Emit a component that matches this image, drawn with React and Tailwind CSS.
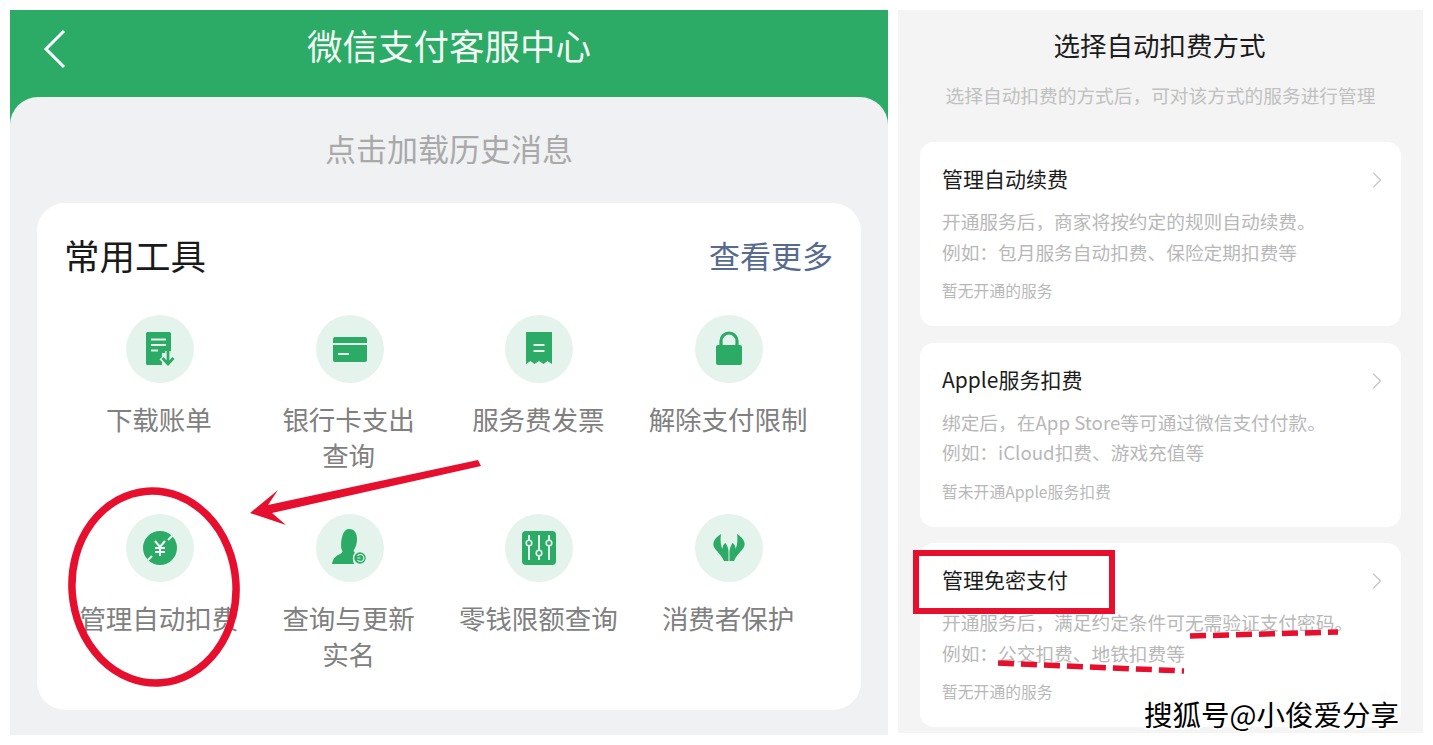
import { ChevronRight } from 'lucide-react';

const font = { fontFamily: '"Noto Sans CJK SC", "Noto Sans", sans-serif' };

const BillIcon = () => (
  <svg width="36" height="36" viewBox="0 0 36 36">
    <path d="M5.500 1h22a1.500 1.500 0 0 1 1.500 1.500V34H5.500A1.500 1.500 0 0 1 4 32.500v-30A1.500 1.500 0 0 1 5.500 1z" fill="#2bab66" />
    <path d="M9 8.500h15M9 14h15M9 19.500h7" stroke="#e4f3eb" strokeWidth="2" />
    <path d="M20 22h12v14H20z" fill="#e4f3eb" />
    <path d="M26 20v13M19.500 26.500l6.500 7 6.500-7" stroke="#e4f3eb" strokeWidth="5.500" fill="none" />
    <path d="M26 20v13M20.500 27l5.500 6 5.500-6" stroke="#2bab66" strokeWidth="2.800" fill="none" />
  </svg>
);

const CardIcon = () => (
  <svg width="36" height="36" viewBox="0 0 36 36">
    <rect x="1" y="6" width="34" height="25" rx="2" fill="#2bab66" />
    <path d="M1 13h34" stroke="#e4f3eb" strokeWidth="1.800" />
    <path d="M6 23h11" stroke="#e4f3eb" strokeWidth="2" />
  </svg>
);

const ReceiptIcon = () => (
  <svg width="36" height="36" viewBox="0 0 36 36">
    <path d="M5 1h26v32l-4.500-3-4 3-4.500-3-4.500 3-4-3L5 33z" fill="#2bab66" />
    <path d="M12.500 14h11M12.500 20h11" stroke="#e4f3eb" strokeWidth="2.200" />
  </svg>
);

const LockIcon = () => (
  <svg width="36" height="36" viewBox="0 0 36 36">
    <path d="M10 16v-6a8 8 0 0 1 16 0v6" stroke="#2bab66" strokeWidth="3.200" fill="none" />
    <rect x="5" y="14" width="26" height="20" rx="2" fill="#2bab66" />
  </svg>
);

const YuanIcon = () => (
  <svg width="36" height="36" viewBox="0 0 36 36">
    <circle cx="18" cy="18" r="17" fill="#2bab66" />
    <path d="M2 34L10 26M26 10L34 2" stroke="#e4f3eb" strokeWidth="2" />
    <path d="M13 11l5 6 5-6M18 17v9M13 18h10M13 22h10" stroke="#f4faf6" strokeWidth="2" fill="none" />
  </svg>
);

const PersonIcon = () => (
  <svg width="38" height="38" viewBox="0 0 38 38">
    <path d="M18 0c6 0 8 5 8 10 0 6-2 9-3.500 12 1 1.500 2 2.500 3 3-3 2-4 6-2.500 10H1c1-6 4-8 8-10 2-1 3-2 2-4-2-3-1-21 7-21z" fill="#2bab66" />
    <circle cx="29" cy="29" r="6.500" fill="#2bab66" stroke="#e4f3eb" strokeWidth="1.500" />
    <path d="M26.500 27a3.500 3.500 0 1 1 0 4M26.500 29h3" stroke="#e4f3eb" strokeWidth="1.200" fill="none" />
  </svg>
);

const SliderIcon = () => (
  <svg width="36" height="36" viewBox="0 0 36 36">
    <rect x="1" y="1" width="34" height="34" rx="4" fill="#2bab66" />
    <path d="M8 5v25M18 5v25M28 5v25" stroke="#e4f3eb" strokeWidth="2" />
    <circle cx="8" cy="13" r="2.800" fill="#2bab66" stroke="#e4f3eb" strokeWidth="1.600" />
    <circle cx="18" cy="23" r="2.800" fill="#2bab66" stroke="#e4f3eb" strokeWidth="1.600" />
    <circle cx="28" cy="13" r="2.800" fill="#2bab66" stroke="#e4f3eb" strokeWidth="1.600" />
  </svg>
);

const handPath = 'M10 4C4 8 1 12 3 17c2 4 7 7 10 14h4.500v-9c0-3-1-6-3-9-2 1-3 3-3 6-1.500-3-2.500-8-1.500-15z';

const HandsIcon = () => (
  <svg width="36" height="36" viewBox="0 0 36 36">
    <path d={handPath} fill="#2bab66" />
    <path d={handPath} fill="#2bab66" transform="translate(36 0) scale(-1 1)" />
  </svg>
);

const tools = [
  { icon: <BillIcon />, label: '下载账单' },
  { icon: <CardIcon />, label: '银行卡支出\n查询' },
  { icon: <ReceiptIcon />, label: '服务费发票' },
  { icon: <LockIcon />, label: '解除支付限制' },
  { icon: <YuanIcon />, label: '管理自动扣费' },
  { icon: <PersonIcon />, label: '查询与更新\n实名' },
  { icon: <SliderIcon />, label: '零钱限额查询' },
  { icon: <HandsIcon />, label: '消费者保护' },
];

const methods = [
  {
    title: '管理自动续费',
    desc: '开通服务后，商家将按约定的规则自动续费。',
    example: '例如：包月服务自动扣费、保险定期扣费等',
    note: '暂无开通的服务',
  },
  {
    title: 'Apple服务扣费',
    desc: '绑定后，在App Store等可通过微信支付付款。',
    example: '例如：iCloud扣费、游戏充值等',
    note: '暂未开通Apple服务扣费',
  },
  {
    title: '管理免密支付',
    desc: '开通服务后，满足约定条件可无需验证支付密码。',
    example: '例如：公交扣费、地铁扣费等',
    note: '暂无开通的服务',
  },
];

const ToolItem = ({ icon, label }) => (
  <div className="flex flex-col items-center">
    <div className="flex h-[68px] w-[68px] items-center justify-center rounded-full bg-[#e4f3eb]">
      {icon}
    </div>
    <div className="-ml-[2px] mt-[18px] whitespace-pre-line text-center text-[26.500px] leading-[36px] text-[#808080]">
      {label}
    </div>
  </div>
);

const MethodCard = ({ title, desc, example, note }) => (
  <div className="relative h-[184px] rounded-[14px] bg-white px-[22px] pt-[20px]">
    <div className="text-[21px] leading-[32px] text-[#1c1c1c]">{title}</div>
    <ChevronRight
      size={28}
      strokeWidth={1}
      className="absolute right-[10px] top-[24px] text-[#c4c4c4]"
    />
    <div className="mt-[12px] text-[18.700px] leading-[30.500px] whitespace-nowrap text-[#b8b8b8]">
      <div>{desc}</div>
      <div>{example}</div>
    </div>
    <div className="mt-[13px] text-[15.800px] leading-[22px] text-[#b8b8b8]">{note}</div>
  </div>
);

const Annotations = () => (
  <svg className="pointer-events-none absolute left-0 top-0" width="1433" height="745" viewBox="0 0 1433 745">
    <ellipse
      cx="154"
      cy="587"
      rx="82"
      ry="96"
      fill="none"
      stroke="#e60f2d"
      strokeWidth="7.500"
      transform="rotate(-4 154 587)"
    />
    <path
      d="M478 460L481 466L272 513L286 525L250 513L278 490L268 505z"
      fill="#e60f2d"
    />
    <rect x="916" y="553" width="196" height="58" fill="none" stroke="#e60f2d" strokeWidth="6" />
    <path d="M1190 636L1338 632" stroke="#e60f2d" strokeWidth="5.500" strokeDasharray="16 7" />
    <path d="M998 663L1184 671" stroke="#e60f2d" strokeWidth="5.500" strokeDasharray="16 7" />
  </svg>
);

const App = () => {
  return (
    <div className="relative flex h-[745px] w-[1433px] gap-[10px] overflow-hidden bg-white p-[10px]" style={font}>
      {/* left screen */}
      <div className="flex h-[725px] w-[878px] flex-col bg-[#2bab66]">
        <div className="relative flex h-[87px] shrink-0 items-center justify-center pb-[18px]">
          <svg className="absolute left-[33px] top-[19px]" width="24" height="40" viewBox="0 0 24 40">
            <path d="M21 2L3 20l18 18" stroke="#fff" strokeWidth="3" fill="none" />
          </svg>
          <div className="text-[35.500px] leading-[46px] text-[#f4f8f5]">微信支付客服中心</div>
        </div>
        <div className="flex-1 rounded-t-[28px] bg-[#f0f1f2] px-[27px]">
          <div className="flex h-[106px] items-center justify-center pb-[4px] text-[31px] text-[#a9a9a9]">
            点击加载历史消息
          </div>
          <div className="h-[507px] rounded-[28px] bg-white pl-[29px] pr-[28px] pt-[28px]">
            <div className="flex items-center justify-between">
              <div className="-ml-[2px] text-[35.500px] leading-[48px] text-[#1a1a1a]">常用工具</div>
              <div className="text-[31px] leading-[48px] text-[#576b8f]">查看更多</div>
            </div>
            <div className="-ml-[1px] mt-[36px] grid w-[759px] grid-cols-4 gap-x-0 gap-y-[20px]">
              {tools.map(tool => (
                <div key={tool.label} className="h-[179px]">
                  <ToolItem icon={tool.icon} label={tool.label} />
                </div>
              ))}
            </div>
          </div>
        </div>
      </div>

      {/* right screen */}
      <div className="h-[723px] w-[525px] bg-[#f4f4f4] px-[22px]">
        <div className="mt-[16px] -translate-x-[1px] text-center text-[26.500px] leading-[38px] text-[#1c1c1c]">
          选择自动扣费方式
        </div>
        <div className="mt-[17px] text-center text-[18.700px] leading-[28px] text-[#c0c0c0]">
          选择自动扣费的方式后，可对该方式的服务进行管理
        </div>
        <div className="mt-[33px] flex flex-col gap-[16.500px]">
          {methods.map(method => (
            <MethodCard key={method.title} {...method} />
          ))}
        </div>
      </div>

      <Annotations />

      <div className="absolute right-[34px] top-[695px] text-[28.500px] leading-[38px] text-black [-webkit-text-stroke:3px_white] [paint-order:stroke_fill]">
        搜狐号@小俊爱分享
      </div>
    </div>
  );
};

export default App;
